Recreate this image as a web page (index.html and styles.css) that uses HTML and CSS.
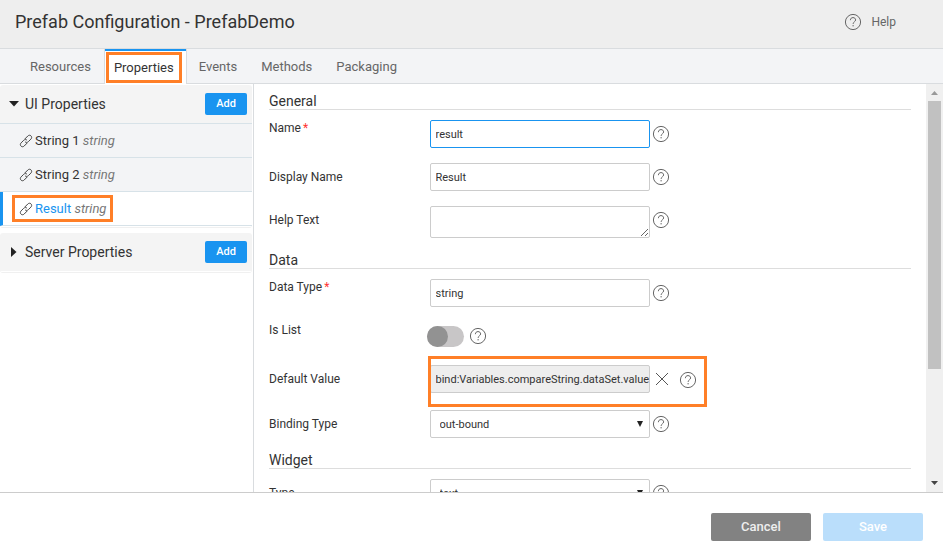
FILE: index.html
```html
<!DOCTYPE html>
<html lang="en">
<head>
<meta charset="utf-8">
<title>Prefab Configuration - PrefabDemo</title>
<link rel="stylesheet" href="styles.css">
</head>
<body>
<svg class="symbols" aria-hidden="true">
  <symbol id="icon-help" viewBox="0 0 18 18">
    <circle cx="9" cy="9" r="7.6"/>
    <path d="M6.400 7.200C6.400 5.500 7.500 4.600 9 4.600s2.600.9 2.600 2.300c0 1.900-2.500 2-2.500 4M9.100 12v1.400"/>
  </symbol>
  <symbol id="icon-link" viewBox="0 0 14 14">
    <path d="M5.800 5L8.800 2c1-1 2.300-1 3.200-.1s.9 2.200-.1 3.200L9.300 7.700c-1 1-2.500 1-3.300 0M8.200 9l-3 3c-1 1-2.300 1-3.200.1s-.9-2.200.1-3.200l2.600-2.600c1-1 2.500-1 3.300 0"/>
  </symbol>
  <symbol id="icon-close" viewBox="0 0 14 14">
    <path d="M1 1l12 12M13 1L1 13"/>
  </symbol>
</svg>

<header class="header">
  <h1 class="title">Prefab Configuration - PrefabDemo</h1>
  <a class="help-link" href="#help"><svg class="icon-help"><use href="#icon-help"/></svg>Help</a>
</header>

<nav class="tabs">
  <a class="tab" href="#resources">Resources</a>
  <a class="tab tab-active" href="#properties"><span class="callout callout-tab">Properties</span></a>
  <a class="tab" href="#events">Events</a>
  <a class="tab" href="#methods">Methods</a>
  <a class="tab" href="#packaging">Packaging</a>
</nav>

<div class="body">
  <aside class="sidebar">
    <section class="group">
      <div class="group-head">
        <svg class="caret" viewBox="0 0 12 12"><path d="M1 3h10L6 8.500z"/></svg>
        <h2 class="group-title">UI Properties</h2>
        <button class="add" type="button">Add</button>
      </div>
      <ul class="items">
        <li><a class="item" href="#string1"><svg class="icon-link"><use href="#icon-link"/></svg><span>String 1 <em>string</em></span></a></li>
        <li><a class="item" href="#string2"><svg class="icon-link"><use href="#icon-link"/></svg><span>String 2 <em>string</em></span></a></li>
        <li><a class="item item-active" href="#result"><span class="callout callout-item"><svg class="icon-link"><use href="#icon-link"/></svg><span>Result <em>string</em></span></span></a></li>
      </ul>
    </section>
    <section class="group">
      <div class="group-head">
        <svg class="caret" viewBox="0 0 12 12"><path d="M3 1v10l5.500-5z"/></svg>
        <h2 class="group-title">Server Properties</h2>
        <button class="add" type="button">Add</button>
      </div>
    </section>
  </aside>

  <form class="form">
    <h3 class="section">General</h3>
    <div class="row">
      <label class="label label-top" for="name">Name<span class="required">*</span></label>
      <div class="control"><input class="field field-focus" id="name" type="text" value="result"><svg class="icon-help"><use href="#icon-help"/></svg></div>
    </div>
    <div class="row">
      <label class="label" for="display">Display Name</label>
      <div class="control"><input class="field" id="display" type="text" value="Result"><svg class="icon-help"><use href="#icon-help"/></svg></div>
    </div>
    <div class="row">
      <label class="label" for="helptext">Help Text</label>
      <div class="control control-area"><textarea class="field area" id="helptext"></textarea><svg class="icon-help"><use href="#icon-help"/></svg></div>
    </div>
    <h3 class="section">Data</h3>
    <div class="row">
      <label class="label label-top" for="datatype">Data Type<span class="required">*</span></label>
      <div class="control"><input class="field" id="datatype" type="text" value="string"><svg class="icon-help"><use href="#icon-help"/></svg></div>
    </div>
    <div class="row">
      <label class="label label-top" for="islist">Is List</label>
      <div class="control control-toggle"><input class="toggle" id="islist" type="checkbox" role="switch"><svg class="icon-help"><use href="#icon-help"/></svg></div>
    </div>
    <div class="row">
      <label class="label" for="default">Default Value</label>
      <div class="control control-bound">
        <input class="field field-bound" id="default" type="text" value="bind:Variables.compareString.dataSet.value" readonly>
        <button class="clear" type="button" aria-label="Clear"><svg class="icon-close"><use href="#icon-close"/></svg></button>
        <svg class="icon-help"><use href="#icon-help"/></svg>
      </div>
    </div>
    <div class="row">
      <label class="label" for="binding">Binding Type</label>
      <div class="control"><span class="select"><select class="field" id="binding"><option>out-bound</option></select></span><svg class="icon-help"><use href="#icon-help"/></svg></div>
    </div>
    <h3 class="section">Widget</h3>
    <div class="row">
      <label class="label" for="type">Type</label>
      <div class="control"><span class="select"><select class="field" id="type"><option>text</option></select></span><svg class="icon-help"><use href="#icon-help"/></svg></div>
    </div>
  </form>

  <div class="scrollbar" aria-hidden="true">
    <svg class="arrow arrow-up" viewBox="0 0 7 4"><path d="M0 4h7L3.500 0z"/></svg>
    <div class="thumb"></div>
    <div class="track"></div>
    <svg class="arrow" viewBox="0 0 7 4"><path d="M0 0h7L3.500 4z"/></svg>
  </div>
</div>

<footer class="footer">
  <button class="action cancel" type="button">Cancel</button>
  <button class="action save" type="button">Save</button>
</footer>
</body>
</html>
```
FILE: styles.css
```css
*,
*::before,
*::after {
  box-sizing: border-box;
}

body {
  margin: 0;
  height: 100vh;
  display: flex;
  flex-direction: column;
  overflow: hidden;
  background: #fff;
  color: #333;
  font-family: Roboto, "Liberation Sans", sans-serif;
  font-size: 13px;
}

button,
input,
select,
textarea {
  font-family: inherit;
}

a {
  color: inherit;
  text-decoration: none;
}

h1,
h2,
h3,
ul {
  margin: 0;
  padding: 0;
  font-weight: 400;
  list-style: none;
}

svg {
  flex: none;
}

.symbols {
  display: none;
}

.icon-help {
  width: 18px;
  height: 18px;
  fill: none;
  stroke: #666;
  stroke-width: 1;
}

.icon-link {
  width: 14px;
  height: 14px;
  fill: none;
  stroke: #444;
  stroke-width: 1;
}

.icon-close {
  width: 14px;
  height: 14px;
  stroke: #555;
  stroke-width: 1;
}

.callout {
  border: 3px solid #ff7f27;
}

/* Header */
.header {
  flex: none;
  display: flex;
  align-items: center;
  justify-content: space-between;
  height: 49px;
  padding: 0 47px 5px 15px;
  background: #eee;
  border-bottom: 1px solid #d9dcdf;
}

.title {
  font-size: 18px;
}

.help-link {
  display: flex;
  align-items: center;
  gap: 9px;
  color: #666;
  font-size: 12px;
}

/* Tabs */
.tabs {
  flex: none;
  display: flex;
  height: 35px;
  padding-left: 18px;
  background: #f3f4f6;
  box-shadow: inset 0 -1px #d9dcdf;
}

.tab {
  display: flex;
  align-items: center;
  padding: 0 12px;
  color: #666;
}

.tab-active {
  align-items: stretch;
  margin-left: 1px;
  padding: 1px 4px 1px 1px;
  background: #fff;
  border: solid #d9dcdf;
  border-width: 0 1px;
  box-shadow: inset 0 2px #1994f0;
  color: #333;
}

.callout-tab {
  display: flex;
  align-items: center;
  margin-top: 2px;
  padding: 0 5px;
}

/* Body */
.body {
  flex: 1;
  min-height: 0;
  display: flex;
}

.sidebar {
  flex: none;
  width: 254px;
  padding: 1px 1px 0 0;
  border-right: 1px solid #d9dcdf;
}

.group {
  margin-bottom: 5px;
  padding-bottom: 1px;
  border-radius: 3px;
  border-bottom: 1px solid #f0f0f0;
}

.group-head {
  display: flex;
  align-items: center;
  height: 38px;
  padding: 0 5px 1px 8px;
  background: #f4f4f4;
  border-radius: 3px 3px 0 0;
}

.caret {
  width: 12px;
  height: 12px;
  margin-right: 5px;
  fill: #222;
}

.group-title {
  flex: 1;
  font-size: 14px;
}

.add {
  width: 42px;
  height: 22px;
  padding: 0;
  border: 0;
  border-radius: 2px;
  background: #1994f0;
  color: #fff;
  font-size: 11px;
  font-weight: 500;
}

.items {
  border-top: 1px solid #d7e2e8;
}

.item {
  display: flex;
  align-items: center;
  gap: 2px;
  height: 34px;
  padding-left: 19px;
  background: #f3f4f6;
  border-bottom: 1px solid #d7e2e8;
}

.item em {
  color: #777;
}

.item-active {
  padding-left: 9px;
  border-left: 3px solid #1994f0;
  background: #fff;
  color: #1994f0;
}

.callout-item {
  display: flex;
  align-items: center;
  gap: 2px;
  height: 27px;
  padding: 0 4px;
}

/* Form */
.form {
  flex: 1;
  min-width: 0;
  overflow: hidden;
  padding: 10px 15px 0;
}

.section {
  height: 16px;
  margin-bottom: 10px;
  border-bottom: 1px solid #ddd;
  font-size: 14px;
  line-height: 15px;
}

.row {
  display: grid;
  grid-template-columns: 25% 1fr;
  align-items: start;
  margin-bottom: 15px;
}

.label {
  font-size: 12px;
  line-height: 28px;
}

.label-top {
  line-height: 16px;
}

.required {
  margin-left: 2px;
  color: #f33;
}

.control {
  display: flex;
  align-items: center;
  gap: 2px;
  min-height: 28px;
}

.control-area {
  align-items: start;
}

.control-area .icon-help {
  margin-top: 5px;
}

.field {
  display: block;
  width: 220px;
  height: 28px;
  margin: 0;
  padding: 0 5px;
  border: 1px solid #ccc;
  border-radius: 2px;
  outline: 0;
  background: #fff;
  color: #333;
  font-size: 11px;
}

.field-focus {
  border-color: #1994f0;
}

.area {
  height: 32px;
  resize: both;
}

.field-bound {
  padding-right: 0;
  background: #eee;
}

.select {
  position: relative;
}

.select .field {
  appearance: none;
  padding-left: 9px;
}

.select::after {
  content: "";
  position: absolute;
  top: 11px;
  right: 7px;
  border: solid transparent;
  border-width: 6px 3px 0;
  border-top-color: #222;
}

.control-toggle {
  gap: 5px;
  margin-left: -3px;
}

.toggle {
  appearance: none;
  display: flex;
  width: 37px;
  height: 21px;
  margin: 0;
  border-radius: 11px;
  background: #c8c6c7;
}

.toggle::before {
  content: "";
  width: 21px;
  border-radius: 50%;
  background: #929292;
}

.control-bound {
  position: relative;
  height: 30px;
  align-items: start;
}

.control-bound::after {
  content: "";
  position: absolute;
  top: -9px;
  left: -2px;
  width: 279px;
  height: 51px;
  border: 3px solid #ff7f27;
  pointer-events: none;
}

.control-bound .icon-help {
  margin-top: 6px;
}

.clear {
  display: grid;
  place-items: center;
  width: 25px;
  height: 28px;
  padding: 0 4px 0 0;
  border: 0;
  background: none;
}

/* Scrollbar */
.scrollbar {
  flex: none;
  display: flex;
  flex-direction: column;
  align-items: center;
  width: 17px;
  padding: 7px 0;
  background: #f0f0f0;
}

.thumb {
  flex: 269;
  width: 13px;
  margin-top: 6px;
  background: #c1c1c1;
}

.track {
  flex: 112;
}

.arrow {
  width: 7px;
  height: 4px;
  fill: #444;
}

.arrow-up {
  fill: #999;
}

/* Footer */
.footer {
  flex: none;
  display: flex;
  justify-content: flex-end;
  gap: 12px;
  height: 67px;
  padding: 20px 20px 0;
  border-top: 1px solid #ccc;
}

.action {
  width: 100px;
  height: 28px;
  padding: 0 0 2px;
  border: 0;
  border-radius: 2px;
  color: #fff;
  font-size: 13px;
  font-weight: 500;
}

.cancel {
  background: #828282;
  color: #eee;
}

.save {
  background: #badefb;
}
```
